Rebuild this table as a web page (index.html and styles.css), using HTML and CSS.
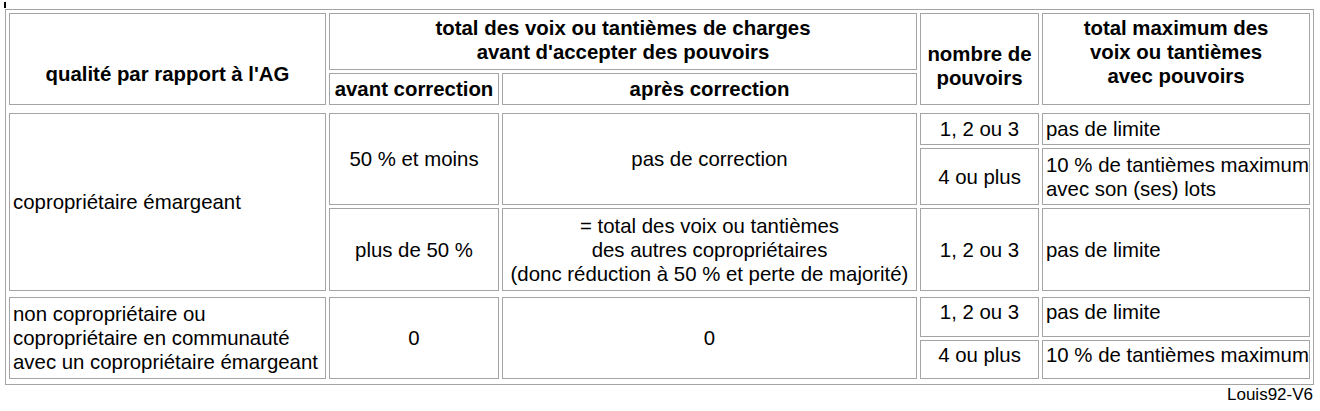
FILE: index.html
```html
<!DOCTYPE html>
<html lang="fr">
<head>
<meta charset="utf-8">
<title>Pouvoirs AG</title>
<link rel="stylesheet" href="styles.css">
</head>
<body>
<div class="caret"></div>
<table class="grid">
  <colgroup>
    <col class="c1"><col class="c2"><col class="c3"><col class="c4"><col class="c5">
  </colgroup>
  <thead>
    <tr class="h1">
      <th rowspan="2" class="q">qualité par rapport à l'AG</th>
      <th colspan="2" class="tv">total des voix ou tantièmes de charges<br>avant d'accepter des pouvoirs</th>
      <th rowspan="2" class="nb">nombre de<br>pouvoirs</th>
      <th rowspan="2" class="tm">total maximum des<br>voix ou tantièmes<br>avec pouvoirs</th>
    </tr>
    <tr class="h2">
      <th>avant correction</th>
      <th>après correction</th>
    </tr>
  </thead>
  <tbody>
    <tr class="gap1"><td colspan="5" class="spacer"></td></tr>
    <tr class="r1">
      <td rowspan="3" class="left">copropriétaire émargeant</td>
      <td rowspan="2">50 % et moins</td>
      <td rowspan="2">pas de correction</td>
      <td>1, 2 ou 3</td>
      <td class="left">pas de limite</td>
    </tr>
    <tr class="r2">
      <td>4 ou plus</td>
      <td class="left">10 % de tantièmes maximum<br>avec son (ses) lots</td>
    </tr>
    <tr class="r3">
      <td>plus de 50 %</td>
      <td>= total des voix ou tantièmes<br>des autres copropriétaires<br>(donc réduction à 50 % et perte de majorité)</td>
      <td>1, 2 ou 3</td>
      <td class="left">pas de limite</td>
    </tr>
    <tr class="gap2"><td colspan="5" class="spacer"></td></tr>
    <tr class="r4">
      <td rowspan="2" class="left">non copropriétaire ou<br>copropriétaire en communauté<br>avec un copropriétaire émargeant</td>
      <td rowspan="2">0</td>
      <td rowspan="2">0</td>
      <td class="top">1, 2 ou 3</td>
      <td class="left top">pas de limite</td>
    </tr>
    <tr class="r5">
      <td class="top">4 ou plus</td>
      <td class="left top">10 % de tantièmes maximum</td>
    </tr>
  </tbody>
</table>
<div class="credit">Louis92-V6</div>
</body>
</html>
```

FILE: styles.css
```css
html, body {
  margin: 0;
  padding: 0;
  background: #ffffff;
}

body {
  font-family: "Liberation Sans", Arial, sans-serif;
  color: #000000;
}

.caret {
  width: 2px;
  height: 6px;
  margin: 2px 0 0 4px;
  background: #000000;
}

.grid {
  box-sizing: border-box;
  width: 1309px;
  margin: 1px 0 0 5px;
  table-layout: fixed;
  border-collapse: separate;
  border-spacing: 3px;
  border: 1px solid #a4a4a4;
  padding-bottom: 2px;
  font-size: 20.4px;
  line-height: 24px;
}

.c1 { width: 317px; }
.c2 { width: 170px; }
.c3 { width: 415px; }
.c4 { width: 119px; }
.c5 { width: 268px; }

.grid th,
.grid td {
  box-sizing: border-box;
  border: 1px solid #a4a4a4;
  padding: 3px;
  text-align: center;
  vertical-align: middle;
  white-space: nowrap;
}

.grid th {
  font-weight: bold;
}

.grid td.spacer {
  border: none;
  padding: 0;
  height: 0;
}

.gap1 { height: 2px; }
.gap2 { height: 0; }

.h1 { height: 57px; }
.h2 { height: 32px; }
.r1 { height: 32px; }
.r2 { height: 57px; }
.r3 { height: 83px; }
.r4 { height: 40px; }
.r5 { height: 39px; }

.grid th.tv {
  padding-top: 1px;
  padding-bottom: 5px;
}

.grid th.q {
  vertical-align: top;
  padding-top: 48px;
}

.grid th.nb {
  vertical-align: top;
  padding-top: 28px;
}

.grid th.tm {
  vertical-align: top;
  padding-top: 2px;
}

.grid td.left {
  text-align: left;
}

.grid td.top {
  vertical-align: top;
  padding-top: 2px;
}

.credit {
  font-size: 17px;
  line-height: 20px;
  text-align: right;
  padding-right: 7px;
  margin-top: 0;
}
```
